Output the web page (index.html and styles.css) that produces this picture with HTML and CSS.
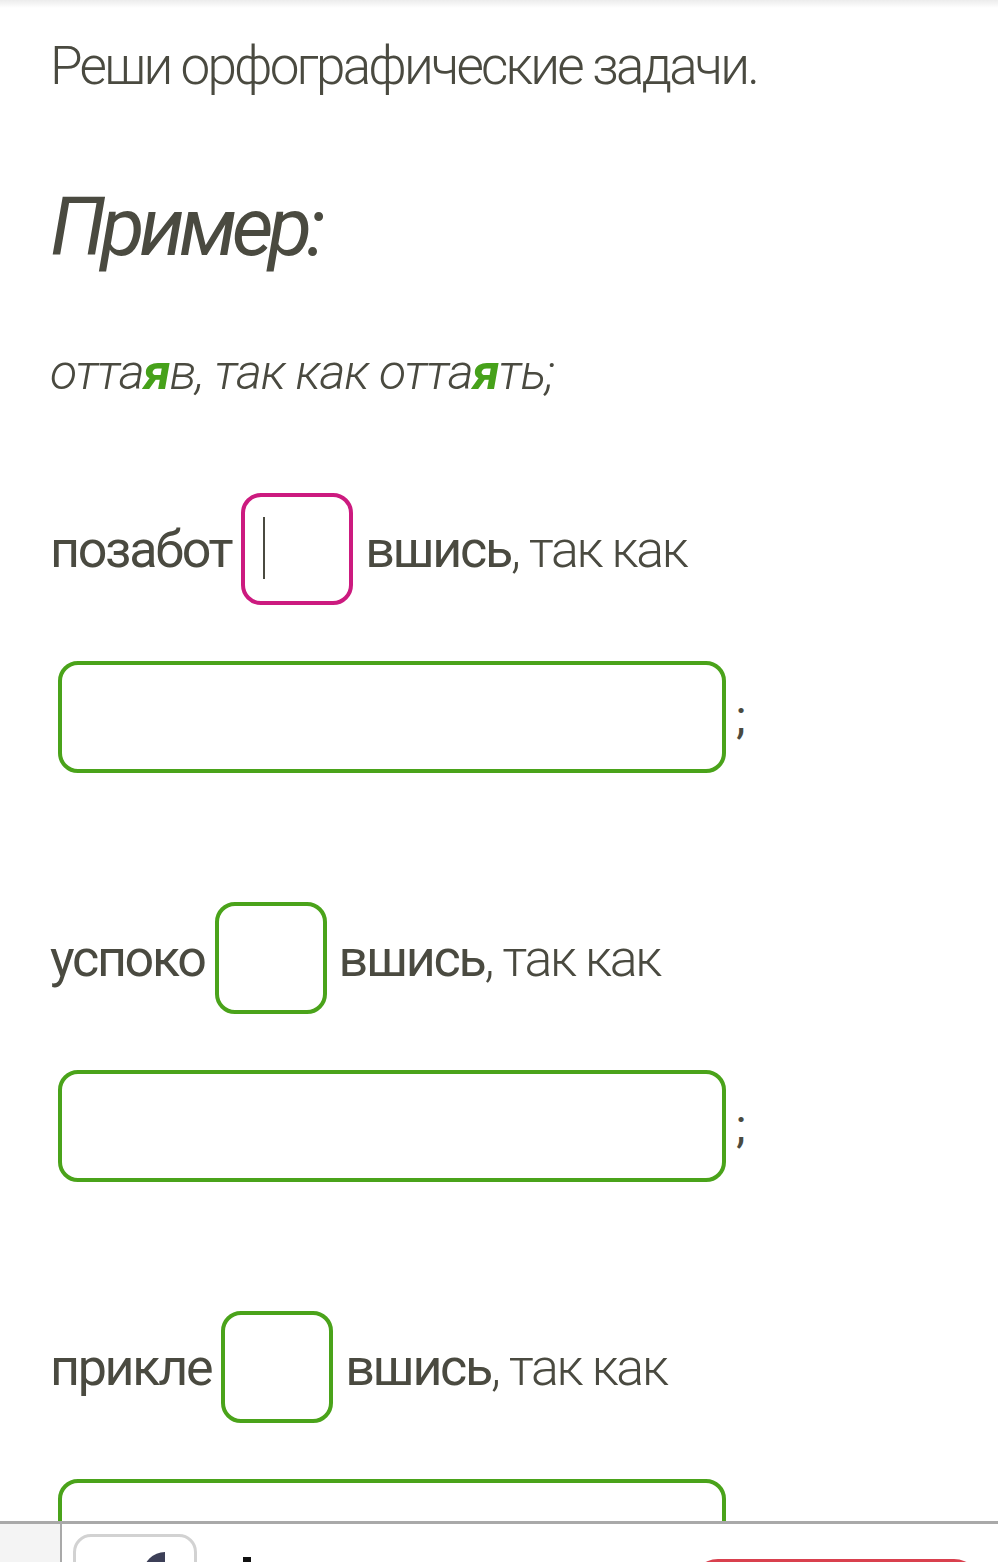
FILE: index.html
```html
<!DOCTYPE html>
<html lang="ru">
<head>
  <meta charset="UTF-8">
  <meta name="viewport" content="width=device-width, initial-scale=1.0">
  <title>Орфографические задачи</title>
  <link rel="stylesheet" href="styles.css">
</head>
<body>
  <div class="top-shadow"></div>

  <main class="task">
    <p class="task-title">Реши орфографические задачи.</p>

    <h2 class="example-title">Пример:</h2>
    <p class="example">отта<b>я</b>в, так как отта<b>я</b>ть;</p>

    <!-- задание 1 -->
    <div class="item">
      <div class="word-line">
        <span class="stem">позабот</span>
        <span class="letter-box active"><span class="caret"></span></span>
        <span class="stem">вшись</span><span class="rest">, так как</span>
      </div>
      <div class="answer-line">
        <span class="answer-box"></span><span class="semi">;</span>
      </div>
    </div>

    <!-- задание 2 -->
    <div class="item">
      <div class="word-line">
        <span class="stem">успоко</span>
        <span class="letter-box"></span>
        <span class="stem">вшись</span><span class="rest">, так как</span>
      </div>
      <div class="answer-line">
        <span class="answer-box"></span><span class="semi">;</span>
      </div>
    </div>

    <!-- задание 3 -->
    <div class="item">
      <div class="word-line">
        <span class="stem">прикле</span>
        <span class="letter-box"></span>
        <span class="stem">вшись</span><span class="rest">, так как</span>
      </div>
      <div class="answer-line last">
        <span class="answer-box"></span>
      </div>
    </div>
  </main>

  <div class="bottom-bar">
    <div class="bar-panel">
      <span class="back-btn"><span class="back-icon"></span></span>
      <span class="bar-mark"></span>
      <span class="check-btn"></span>
    </div>
  </div>
</body>
</html>
```

FILE: styles.css
```css
body {
  margin: 0;
  padding: 0;
  background: #fff;
  color: #4a4a40;
  font-family: Roboto, "Noto Sans", sans-serif;
}
.top-shadow {
  height: 8px;
  background: linear-gradient(#ececec, #fff);
}
.task {
  padding: 0 0 60px 50px;
}
.task-title {
  margin: 26px 0 0;
  font-size: 53px;
  font-weight: 300;
  letter-spacing: -2.8px;
  line-height: 64px;
}
.example-title {
  margin: 82px 0 0;
  font-size: 81px;
  font-style: italic;
  font-weight: 400;
  letter-spacing: -5.5px;
  line-height: 96px;
}
.example {
  margin: 66px 0 0;
  font-size: 50px;
  font-style: italic;
  font-weight: 300;
  letter-spacing: -1.2px;
  line-height: 60px;
}
.example b {
  color: #46a11a;
  font-weight: 700;
}
.item {
  margin-top: 91px;
}
.item + .item {
  margin-top: 129px;
}
.word-line {
  display: flex;
  align-items: center;
  height: 112px;
  font-size: 52px;
  letter-spacing: -2.3px;
}
.stem {
  font-weight: 400;
}
.rest {
  font-weight: 300;
}
.letter-box {
  box-sizing: border-box;
  width: 112px;
  height: 112px;
  margin: 0 12px 0 10px;
  border: 4px solid #4aa31a;
  border-radius: 20px;
  position: relative;
}
.letter-box.active {
  border-color: #cc1a7f;
}
.caret {
  position: absolute;
  left: 18px;
  top: 20px;
  width: 2px;
  height: 62px;
  background: #4a4a40;
}
.answer-line {
  display: flex;
  align-items: center;
  margin-top: 56px;
  padding-left: 8px;
}
.answer-box {
  box-sizing: border-box;
  width: 668px;
  height: 112px;
  border: 4px solid #4aa31a;
  border-radius: 20px;
}
.semi {
  margin-left: 10px;
  font-size: 46px;
  font-weight: 400;
}
.bottom-bar {
  position: fixed;
  left: 0;
  right: 0;
  bottom: 0;
  height: 38px;
  background: #f4f4f4;
  border-top: 3px solid #a9a9a9;
}
.bar-panel {
  position: relative;
  margin-left: 60px;
  height: 100%;
  background: #fff;
  border-left: 2px solid #a9a9a9;
  overflow: hidden;
}
.back-btn {
  position: absolute;
  left: 11px;
  top: 10px;
  width: 124px;
  height: 60px;
  box-sizing: border-box;
  border: 3px solid #d2d2d2;
  border-radius: 18px;
}
.back-icon {
  position: absolute;
  left: 67px;
  top: 15px;
  width: 22px;
  height: 40px;
  background: #3c3f57;
  border-radius: 22px 0 0 0;
}
.bar-mark {
  position: absolute;
  left: 181px;
  top: 33px;
  width: 8px;
  height: 20px;
  background: #111;
}
.check-btn {
  position: absolute;
  left: 628px;
  top: 35px;
  width: 292px;
  height: 60px;
  background: #d9404e;
  border-radius: 28px;
}
```
